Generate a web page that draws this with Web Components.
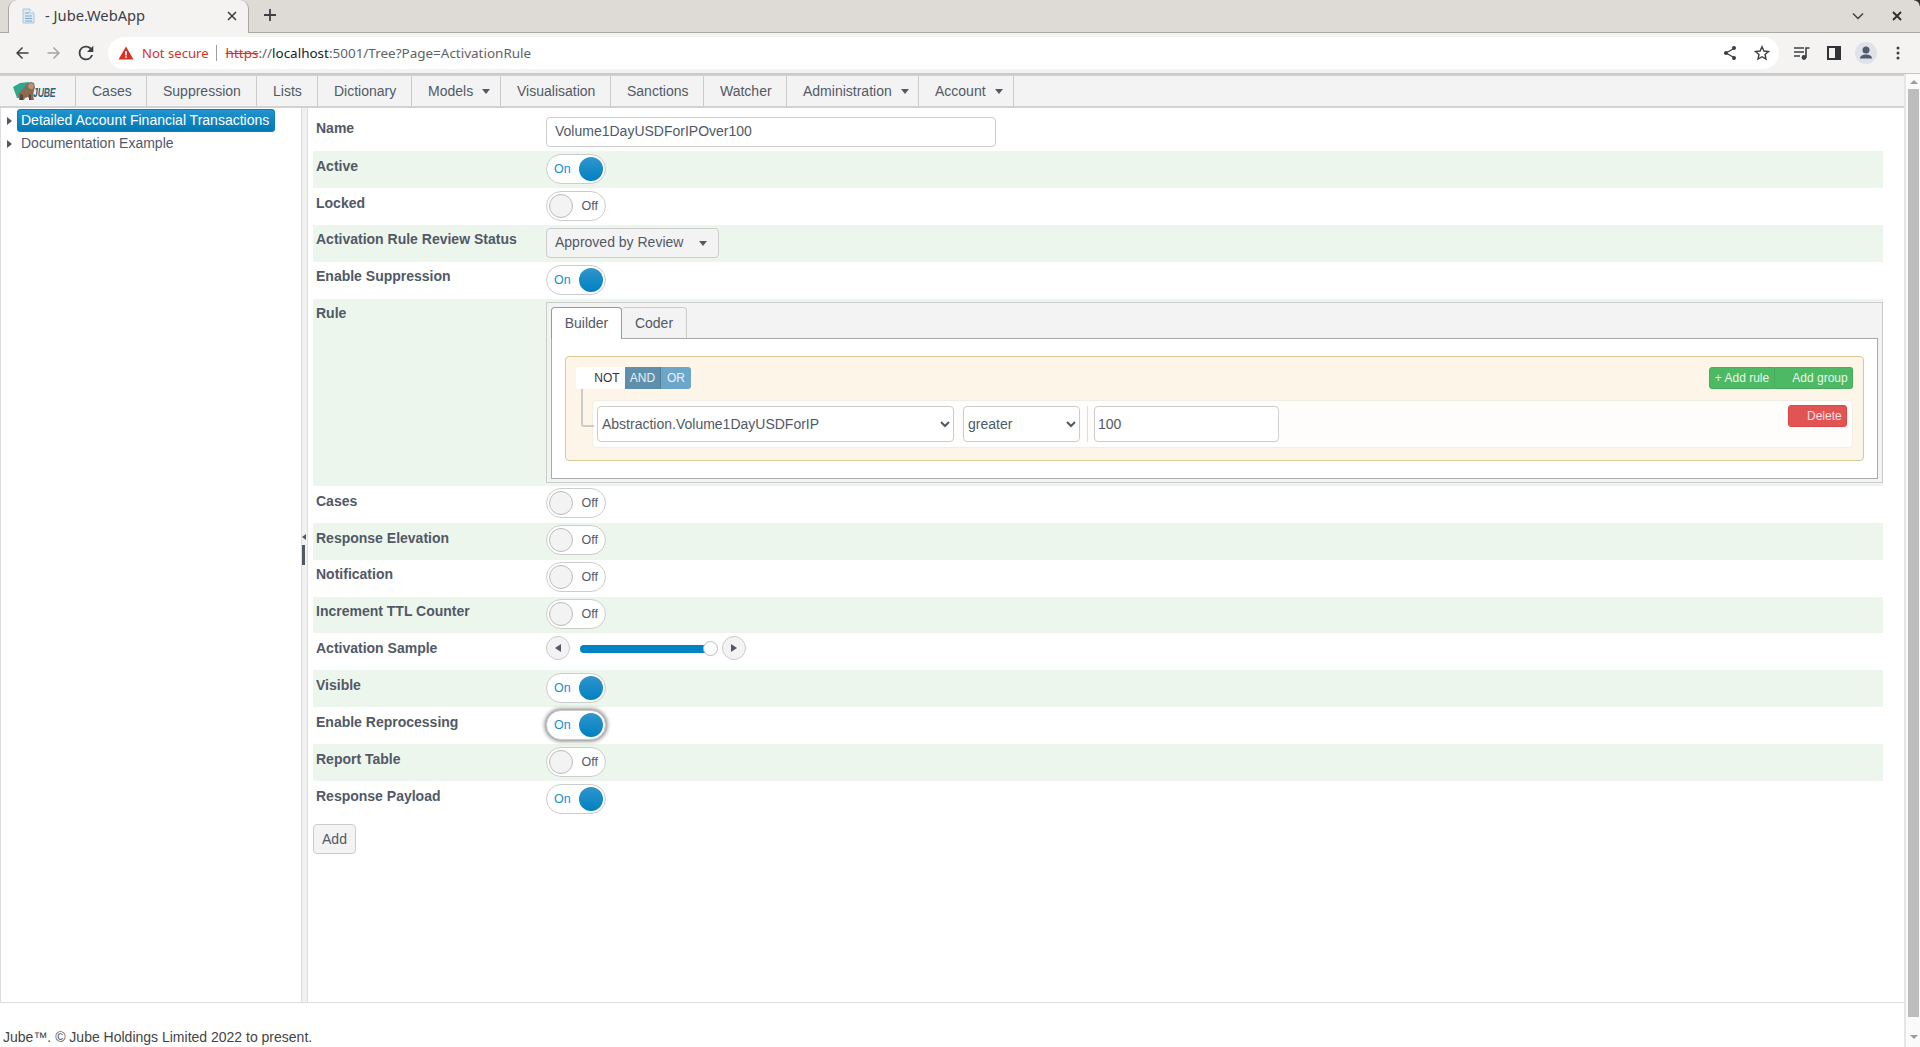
<!DOCTYPE html>
<html lang="en">
<head>
<meta charset="utf-8">
<title>- Jube.WebApp</title>
<style>
  html, body { margin: 0; padding: 0; height: 100%; overflow: hidden; background: #fff; }
  body { font: 14px "Liberation Sans", Arial, sans-serif; color: #515967; }
  jube-app { height: 1047px; }
</style>
</head>
<body>
<jube-app>
  <browser-chrome slot="chrome" title-text="- Jube.WebApp"></browser-chrome>
  <app-menu slot="menu"></app-menu>
  <tree-panel slot="tree"></tree-panel>
  <rule-form slot="form"></rule-form>
</jube-app>

<script>
class JubeApp extends HTMLElement {
    constructor() {
        super();
        this.shadowDOM = this.attachShadow({ mode: "open" });
    }
    connectedCallback() {
        this.shadowDOM.innerHTML = `
        <style>
            :host { display: flex; flex-direction: column; width: 1920px; }
            .page { flex: 1; display: flex; min-height: 0; }
            .left { flex: 1; display: flex; flex-direction: column; min-width: 0; }
            .main { height: 894px; display: flex; border-bottom: 1px solid #ddd; border-left: 1px solid #ddd; box-sizing: content-box; }
            .splitter { width: 7px; background: #f1f1f1; border-left: 1px solid #ddd; border-right: 1px solid #ddd; box-sizing: border-box; display: flex; flex-direction: column; padding-top: 426px; }
            .splitter i { display: block; width: 0; height: 0; border: 3px solid transparent; border-right: 4px solid #515967; border-left: 0; margin: 0 0 5px 0; }
            .splitter b { display: block; width: 3px; height: 20px; background: #515967; }
            footer { flex: 1; color: #444; padding: 26px 0 0 3px; line-height: 16px; }
            .scroll { width: 16px; background: #fafafa; border-left: 2px solid #e6e6e6; box-sizing: border-box; display: flex; flex-direction: column; align-items: center; padding: 6px 0 0 1px; }
            .up { width: 0; height: 0; border: 4px solid transparent; border-bottom: 4px solid #9b9b9b; border-top: 0; }
            .thumb { width: 11px; height: 928px; background: #bdbdbd; margin-top: 5px; }
            .down { width: 0; height: 0; border: 4px solid transparent; border-top: 4px solid #9b9b9b; border-bottom: 0; margin-top: 18px; }
        </style>
        <slot name="chrome"></slot>
        <div class="page">
            <div class="left">
                <slot name="menu"></slot>
                <div class="main">
                    <slot name="tree"></slot>
                    <div class="splitter"><i></i><b></b></div>
                    <slot name="form"></slot>
                </div>
                <footer>Jube™. © Jube Holdings Limited 2022 to present.</footer>
            </div>
            <div class="scroll"><div class="up"></div><div class="thumb"></div><div class="down"></div></div>
        </div>`;
    }
}

class BrowserChrome extends HTMLElement {
    constructor() {
        super();
        this.shadowDOM = this.attachShadow({ mode: "open" });
    }
    connectedCallback() {
        this.shadowDOM.innerHTML = `
        <style>
            :host { display: block; height: 74px; font-family: "Noto Sans", "Open Sans", sans-serif; position: relative; }
            .strip { height: 32px; background: #dedbd7; border-bottom: 1px solid #aaa8a4; display: flex; align-items: stretch; padding-left: 8px; }
            .tab { width: 241px; height: 33px; box-sizing: border-box; background: #f5f3f1; border-radius: 9px 9px 0 0; display: flex; align-items: center; padding: 0 11px 2px 12px; color: #3c4043; font-size: 14.7px; border: 1px solid #aaa8a4; border-top: 0; border-bottom: 0; }
            .tab span { flex: 1; margin: 0 0 2px 8px; white-space: nowrap; }
            .plus { margin: 8px 0 0 14px; }
            .spacer { flex: 1; }
            .win { display: flex; gap: 28px; align-items: center; padding: 0 18px 0 0; }
            .tools { height: 41px; background: #f5f3f1; border-bottom: 1px solid #c6c6c6; box-sizing: border-box; display: flex; align-items: center; padding: 0 12px 0 12px; }
            .nav { display: flex; gap: 12px; align-items: center; }
            .omni { width: 1671px; height: 32px; margin-left: 12px; background: #fff; border-radius: 16px; display: flex; align-items: center; padding: 0 9px 0 10px; box-sizing: border-box; font-size: 13.2px; white-space: nowrap; }
            .warn { color: #d93025; margin-left: 8px; font-size: 13.1px; }
            .sep { width: 1px; height: 16px; background: #9aa0a6; margin: 0 9px 0 7px; }
            .url { color: #5f6368; font-size: 13.47px; }
            .url s { color: #d93025; }
            .url b { color: #202124; font-weight: 400; }
            .omni .fill { flex: 1; }
            .omni .ic { display: flex; gap: 16px; align-items: center; }
            .right { display: flex; align-items: center; margin-left: 14px; }
            .right .panel { margin-left: 16px; }
            .right .avatar { margin-left: 14px; }
            .right .dots { margin-left: 19px; }
            svg { display: block; flex: none; }
            .corner { position: absolute; top: 0; right: 0; width: 6px; height: 6px; background: radial-gradient(circle at 0 100%, transparent 5px, #333 6px); }
        </style>
        <div class="strip">
            <div class="tab">
                <svg width="16" height="16" viewBox="0 0 16 16"><path d="M2 1h7l4 4v10H2z" fill="#dceaf5" stroke="#a9c4da"/><path d="M4 5h4M4 8h7M4 10.500h7M4 13h7" stroke="#7ea6c6"/><path d="M9 1v4h4" fill="#fff" stroke="#a9c4da"/></svg>
                <span>${this.getAttribute("title-text")}</span>
                <svg width="10" height="10" viewBox="0 0 10 10"><path d="M1 1l8 8M9 1l-8 8" stroke="#3c4043" stroke-width="1.600"/></svg>
            </div>
            <svg class="plus" width="14" height="14" viewBox="0 0 14 14"><path d="M7 1v12M1 7h12" stroke="#3c4043" stroke-width="1.800"/></svg>
            <div class="spacer"></div>
            <div class="win">
                <svg width="12" height="8" viewBox="0 0 12 8"><path d="M1 1.500l5 5 5-5" fill="none" stroke="#3c4043" stroke-width="1.500"/></svg>
                <svg width="10" height="10" viewBox="0 0 10 10"><path d="M1 1l8 8M9 1l-8 8" stroke="#2b2b2b" stroke-width="1.800"/></svg>
            </div>
        </div>
        <div class="tools">
            <div class="nav">
                <svg width="20" height="20" viewBox="0 0 20 20"><path d="M16.500 9.250H6.870l4.200-4.200L10 4l-6 6 6 6 1.060-1.060-4.200-4.200h9.640z" fill="#3c4043"/></svg>
                <svg width="20" height="20" viewBox="0 0 20 20"><path d="M3.500 9.250h9.630l-4.200-4.200L10 4l6 6-6 6-1.060-1.060 4.200-4.200H3.500z" fill="#a3a5a6"/></svg>
                <svg width="20" height="20" viewBox="0 0 20 20"><path d="M15.200 4.800A7.300 7.300 0 0 0 10 2.700a7.300 7.300 0 1 0 7 9.300h-1.900A5.500 5.500 0 1 1 10 4.500c1.500 0 2.900.62 3.900 1.600L11 9h6.300V2.700z" fill="#3c4043"/></svg>
            </div>
            <div class="omni">
                <svg width="16" height="16" viewBox="0 0 16 16"><path d="M8 1.500L15.500 14.500H.5z" fill="#d93025"/><path d="M7.200 6h1.600v4.500H7.200zM7.200 11.300h1.600v1.500H7.200z" fill="#fff"/></svg>
                <span class="warn">Not secure</span>
                <span class="sep"></span>
                <span class="url"><s>https</s>://<b>localhost</b>:5001/Tree?Page=ActivationRule</span>
                <span class="fill"></span>
                <span class="ic">
                    <svg width="16" height="16" viewBox="0 0 16 16"><path d="M12 3.500L4 8l8 4.500" fill="none" stroke="#3c4043" stroke-width="1.300"/><circle cx="12" cy="3" r="2" fill="#3c4043"/><circle cx="4" cy="8" r="2" fill="#3c4043"/><circle cx="12" cy="13" r="2" fill="#3c4043"/></svg>
                    <svg width="16" height="16" viewBox="0 0 16 16"><path d="M8 1.700l1.900 4.300 4.600.5-3.500 3 1 4.600L8 11.700l-4 2.400 1-4.600-3.500-3 4.600-.5z" fill="none" stroke="#3c4043" stroke-width="1.400"/></svg>
                </span>
            </div>
            <div class="right">
                <svg width="18" height="16" viewBox="0 0 18 16"><path d="M1 3h10M1 7h10M1 11h6" stroke="#3c4043" stroke-width="1.500"/><path d="M13 12.500V3h3.500" fill="none" stroke="#3c4043" stroke-width="1.600"/><circle cx="11" cy="12.500" r="2.400" fill="#3c4043"/></svg>
                <svg class="panel" width="14" height="14" viewBox="0 0 14 14"><rect x="0" y="0" width="14" height="14" fill="#2f3337"/><rect x="2" y="2" width="6" height="10" fill="#f5f3f1"/></svg>
                <svg class="avatar" width="22" height="22" viewBox="0 0 22 22"><circle cx="11" cy="11" r="11" fill="#dfe2e8"/><circle cx="11" cy="8" r="3.500" fill="#4f5b70"/><path d="M5 16.500c0-2.800 3-4 6-4s6 1.200 6 4z" fill="#4f5b70"/></svg>
                <svg class="dots" width="4" height="14" viewBox="0 0 4 14"><circle cx="2" cy="2" r="1.500" fill="#3c4043"/><circle cx="2" cy="7" r="1.500" fill="#3c4043"/><circle cx="2" cy="12" r="1.500" fill="#3c4043"/></svg>
            </div>
        </div>
        <div class="corner"></div>`;
    }
}

class AppMenu extends HTMLElement {
    constructor() {
        super();
        this.shadowDOM = this.attachShadow({ mode: "open" });
    }
    connectedCallback() {
        const items = [
            ["Cases", 0, 71], ["Suppression", 0, 110], ["Lists", 0, 61], ["Dictionary", 0, 94], ["Models", 1, 89],
            ["Visualisation", 0, 110], ["Sanctions", 0, 93], ["Watcher", 0, 83], ["Administration", 1, 132], ["Account", 1, 95]
        ];
        this.shadowDOM.innerHTML = `
        <style>
            :host { display: flex; height: 34px; box-sizing: border-box; background: #f3f3f3; border-top: 2px solid #cfcfcf; border-bottom: 2px solid #d2d2d2; color: #515967; }
            .logo { width: 76px; box-sizing: border-box; border-right: 1px solid #ccc; display: flex; align-items: center; padding-left: 12px; position: relative; }
            .logo span { font: italic bold 12px "Liberation Sans", sans-serif; color: #2b6277; display: inline-block; transform: scaleX(.72); transform-origin: left; margin: 3px 0 0 -3px; letter-spacing: -.2px; }
            .item { box-sizing: border-box; border-right: 1px solid #ccc; padding-left: 16px; display: flex; align-items: center; white-space: nowrap; }
            .item i { display: block; width: 0; height: 0; border: 4px solid transparent; border-top: 5px solid #515967; border-bottom: 0; margin: 1px 0 0 9px; }
        </style>
        <div class="logo">
            <svg width="24" height="21" viewBox="0 0 24 21">
                <path d="M1 6L8 2 17 1 15 10 10 17 5 17z" fill="#2ea98f"/>
                <path d="M16 2l3-1 3 1 1 4-1 4-1 4 1 5-4 0-2-3-3 1-1 2-5 0 0-3-1-3 3-3 3-3 2-3z" fill="#8a6a50"/>
                <path d="M17 3l3-1 2 2-1 4-3 0-2-2z" fill="#b3957a"/>
                <path d="M8 13l3 1 0 5-3 0zM17 13l2 1v5h-2z" fill="#5c4535"/>
            </svg>
            <span>JUBE</span>
        </div>
        ${items.map(([name, caret, width]) => `<div class="item" style="width:${width}px">${name}${caret ? "<i></i>" : ""}</div>`).join("")}`;
    }
}

class TreePanel extends HTMLElement {
    constructor() {
        super();
        this.shadowDOM = this.attachShadow({ mode: "open" });
    }
    connectedCallback() {
        this.shadowDOM.innerHTML = `
        <style>
            :host { display: block; width: 300px; box-sizing: border-box; padding-top: 1px; color: #515967; }
            .node { display: flex; align-items: center; height: 23px; margin-bottom: 0; white-space: nowrap; }
            .arrow { width: 0; height: 0; border: 4px solid transparent; border-left: 5px solid #515967; border-right: 0; margin: 0 0 0 6px; }
            .label { margin-left: 5px; padding: 0 5px 0 4px; height: 23px; line-height: 22px; border-radius: 4px; }
            .selected { color: #fff; background: linear-gradient(#2394d0, #0077b3); box-shadow: inset 0 0 0 1px #0b7fbc; width: 249px; }
        </style>
        <div class="node"><span class="arrow"></span><span class="label selected">Detailed Account Financial Transactions</span></div>
        <div class="node"><span class="arrow"></span><span class="label">Documentation Example</span></div>`;
    }
}

class FormRow extends HTMLElement {
    constructor() {
        super();
        this.shadowDOM = this.attachShadow({ mode: "open" });
    }
    connectedCallback() {
        const nudge = Number(this.getAttribute("nudge") || 0);
        this.shadowDOM.innerHTML = `
        <style>
            :host { display: grid; grid-template-columns: 233px 1fr; height: 36.9px; box-sizing: border-box; padding: var(--row-pad, 3px) 0 0 0; }
            :host([striped]) { background: #edf6ec; }
            :host([tall]) { height: 187.3px; }
            label { font-weight: 700; color: #515967; padding: ${3 + nudge}px 0 0 3px; line-height: 16px; }
        </style>
        <label>${this.getAttribute("label")}</label>
        <div><slot></slot></div>`;
    }
}

class ToggleSwitch extends HTMLElement {
    constructor() {
        super();
        this.shadowDOM = this.attachShadow({ mode: "open" });
    }
    connectedCallback() {
        const on = this.hasAttribute("on");
        this.shadowDOM.innerHTML = `
        <style>
            :host { display: block; width: 60px; height: 30px; }
            .sw { width: 60px; height: 30px; box-sizing: border-box; background: #fff; border: 1px solid #ccc; border-radius: 15px; display: flex; align-items: center; font-size: 12.500px; padding: 0 2px; justify-content: space-between; }
            :host([focused]) .sw { box-shadow: 0 0 4px 1px #777; }
            .on { color: #1490d2; margin-left: 5px; }
            .off { color: #515967; margin-right: 5px; }
            .knob { width: 24px; height: 24px; border-radius: 50%; box-sizing: border-box; }
            .knob.active { background: linear-gradient(#3096cc, #0080c2); }
            .knob.idle { background: #f3f3f3; border: 1px solid #bbb; }
        </style>
        <div class="sw">${on
            ? `<span class="on">On</span><span class="knob active"></span>`
            : `<span class="knob idle"></span><span class="off">Off</span>`}</div>`;
    }
}

class SliderControl extends HTMLElement {
    constructor() {
        super();
        this.shadowDOM = this.attachShadow({ mode: "open" });
    }
    connectedCallback() {
        this.shadowDOM.innerHTML = `
        <style>
            :host { display: flex; align-items: center; width: 200px; height: 24px; }
            .btn { width: 24px; height: 24px; box-sizing: border-box; border-radius: 50%; border: 1px solid #ccc; background: #f3f3f3; display: flex; align-items: center; justify-content: center; flex: none; }
            .l { width: 0; height: 0; border: 4px solid transparent; border-right: 6px solid #515967; border-left: 0; }
            .r { width: 0; height: 0; border: 4px solid transparent; border-left: 6px solid #515967; border-right: 0; }
            .track { width: 130px; height: 8px; background: #0083c4; border-radius: 4px 0 0 4px; margin: 1px 12px 0 10px; position: relative; }
            .grip { position: absolute; right: -8px; top: -4px; width: 15px; height: 15px; box-sizing: border-box; background: #fff; border: 1px solid #bbb; border-radius: 50%; }
        </style>
        <div class="btn"><span class="l"></span></div>
        <div class="track"><span class="grip"></span></div>
        <div class="btn"><span class="r"></span></div>`;
    }
}

class QueryBuilder extends HTMLElement {
    constructor() {
        super();
        this.shadowDOM = this.attachShadow({ mode: "open" });
    }
    connectedCallback() {
        this.shadowDOM.innerHTML = `
        <style>
            :host { display: block; width: 100%; height: 181px; box-sizing: border-box; background: #f3f3f3; border: 1px solid #ccc; padding: 4px; color: #515967; }
            .tabs { display: flex; height: 31px; }
            .tab { box-sizing: border-box; height: 31px; display: flex; align-items: center; justify-content: center; border: 1px solid #bbb; border-bottom: 0; border-radius: 4px 4px 0 0; background: #f3f3f3; position: relative; }
            .tab.active { background: #fff; width: 71px; border-color: #999; margin-bottom: -1px; height: 32px; z-index: 1; }
            .tab.idle { width: 65px; border-left: 0; border-color: #ccc; }
            .panel { height: 141px; box-sizing: border-box; background: #fff; border: 1px solid #aaa; padding: 17px 13px 0 13px; }
            .group { height: 105px; box-sizing: border-box; background: #fcf5e8; border: 1px solid #dcc896; border-radius: 4px; padding: 10px 10px 0 10px; position: relative; }
            .head { display: flex; justify-content: space-between; height: 22px; font-size: 12px; }
            .conds { display: flex; }
            .conds span, .acts span { display: flex; align-items: center; justify-content: center; height: 22px; box-sizing: border-box; }
            .not { width: 49px; background: #fff; color: #333; padding-left: 13px; border-radius: 3px 0 0 3px; }
            .and { width: 36px; background: #5f8fab; color: #e8f0f4; border-right: 1px solid #4d7f9c; }
            .or { width: 30px; background: #6ca7ca; color: #e8f2f8; border-radius: 0 3px 3px 0; }
            .acts { display: flex; color: #e6f5e9; }
            .acts span { background: #4db964; border: 1px solid #45ad5b; }
            .add-rule { width: 66px; border-radius: 3px 0 0 3px; }
            .add-group { width: 78px; border-left: 0 !important; border-radius: 0 3px 3px 0; padding-left: 13px; }
            .wire { position: absolute; left: 15px; top: 32px; width: 13px; height: 38px; box-sizing: border-box; border-left: 2px solid #ccc; border-bottom: 2px solid #ccc; border-radius: 0 0 0 3px; }
            .rule { margin: 11px 0 0 16px; height: 48px; box-sizing: border-box; background: #fefdfb; border: 1px solid #f1eee8; border-radius: 4px; padding: 5px 5px 0 4px; display: flex; align-items: flex-start; position: relative; }
            select, input { font: 14px "Liberation Sans", Arial, sans-serif; color: #515967; height: 36px; box-sizing: border-box; border: 1px solid #ccc; border-radius: 4px; background: #fff; margin: 0; }
            .f { width: 357px; margin-right: 9px; }
            .o { width: 117px; }
            .div { width: 1px; height: 36px; background: #ddd; margin: 0 6px 0 7px; }
            input { width: 185px; padding: 0 3px; outline: 0; }
            .spacer { flex: 1; }
            .del { width: 59px; height: 22px; box-sizing: border-box; background: #e25353; border: 1px solid #dc4848; border-radius: 3px; color: #f8e2e2; font-size: 12px; display: flex; align-items: center; padding-left: 18px; margin-top: -1px; }
        </style>
        <div class="tabs">
            <div class="tab active">Builder</div>
            <div class="tab idle">Coder</div>
        </div>
        <div class="panel">
            <div class="group">
                <div class="head">
                    <div class="conds"><span class="not">NOT</span><span class="and">AND</span><span class="or">OR</span></div>
                    <div class="acts"><span class="add-rule">+ Add rule</span><span class="add-group">Add group</span></div>
                </div>
                <div class="rule">
                    <select class="f"><option>Abstraction.Volume1DayUSDForIP</option></select>
                    <select class="o"><option>greater</option></select>
                    <span class="div"></span>
                    <input value="100">
                    <span class="spacer"></span>
                    <div class="del">Delete</div>
                </div>
                <div class="wire"></div>
            </div>
        </div>`;
    }
}

class RuleForm extends HTMLElement {
    constructor() {
        super();
        this.shadowDOM = this.attachShadow({ mode: "open" });
    }
    connectedCallback() {
        this.shadowDOM.innerHTML = `
        <style>
            :host { display: block; flex: 1; min-width: 0; box-sizing: border-box; padding: 6.1px 21px 0 5px; color: #515967; }
            .lower { --row-pad: 2.6px; }
            .name { width: 450px; height: 30px; box-sizing: border-box; border: 1px solid #ccc; border-radius: 4px; font: 14px "Liberation Sans", sans-serif; color: #515967; padding: 0 8px 2px; outline: 0; display: block; }
            .drop { width: 173px; height: 30px; box-sizing: border-box; border: 1px solid #ccc; border-radius: 4px; background: #f3f3f3; display: flex; align-items: center; justify-content: space-between; padding: 0 11px 2px 8px; }
            .drop i { width: 0; height: 0; border: 4px solid transparent; border-top: 5px solid #515967; border-bottom: 0; margin-top: 4px; }
            .add { display: block; margin-top: 6px; width: 43px; height: 30px; box-sizing: border-box; border: 1px solid #ccc; border-radius: 4px; background: #f3f3f3; font: 14px "Liberation Sans", sans-serif; color: #515967; padding: 0; }
        </style>
        <form-row label="Name"><input class="name" value="Volume1DayUSDForIPOver100"></form-row>
        <form-row label="Active" nudge="1" striped><toggle-switch on></toggle-switch></form-row>
        <form-row label="Locked" nudge="1"><toggle-switch></toggle-switch></form-row>
        <form-row label="Activation Rule Review Status" striped><div class="drop"><span>Approved by Review</span><i></i></div></form-row>
        <form-row label="Enable Suppression"><toggle-switch on></toggle-switch></form-row>
        <form-row label="Rule" striped tall><query-builder></query-builder></form-row>
        <div class="lower">
            <form-row label="Cases" nudge="2"><toggle-switch></toggle-switch></form-row>
            <form-row label="Response Elevation" nudge="2" striped><toggle-switch></toggle-switch></form-row>
            <form-row label="Notification" nudge="1"><toggle-switch></toggle-switch></form-row>
            <form-row label="Increment TTL Counter" nudge="1" striped><toggle-switch></toggle-switch></form-row>
            <form-row label="Activation Sample" nudge="1"><slider-control></slider-control></form-row>
            <form-row label="Visible" nudge="1" striped><toggle-switch on></toggle-switch></form-row>
            <form-row label="Enable Reprocessing" nudge="1"><toggle-switch on focused></toggle-switch></form-row>
            <form-row label="Report Table" nudge="1" striped><toggle-switch></toggle-switch></form-row>
            <form-row label="Response Payload" nudge="1"><toggle-switch on></toggle-switch></form-row>
        </div>
        <button class="add" type="button">Add</button>`;
    }
}

customElements.define("jube-app", JubeApp);
customElements.define("browser-chrome", BrowserChrome);
customElements.define("app-menu", AppMenu);
customElements.define("tree-panel", TreePanel);
customElements.define("form-row", FormRow);
customElements.define("toggle-switch", ToggleSwitch);
customElements.define("slider-control", SliderControl);
customElements.define("query-builder", QueryBuilder);
customElements.define("rule-form", RuleForm);
</script>
</body>
</html>
